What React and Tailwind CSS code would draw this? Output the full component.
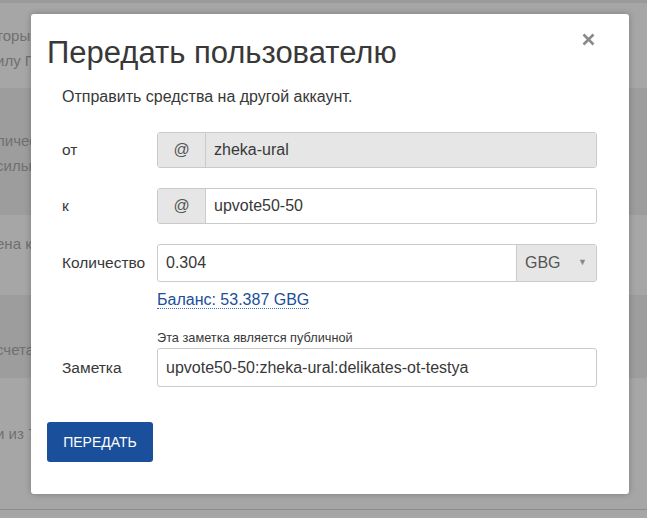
import React from "react";

const bands = [
  { h: "h-[85px]", bg: "bg-[#a6a6a6]", pt: "pt-[20px]", lines: ["торый вы", "илу Голоса"] },
  { h: "h-[127px]", bg: "bg-[#9d9d9d]", pt: "pt-[40px]", lines: ["личество", "сильнее"] },
  { h: "h-[80px]", bg: "bg-[#a6a6a6]", pt: "pt-[16px]", lines: ["ена к"] },
  { h: "h-[83px]", bg: "bg-[#9d9d9d]", pt: "pt-[42px]", lines: ["счета"] },
  { h: "h-[131px]", bg: "bg-[#a6a6a6]", pt: "pt-[43px]", lines: ["и из 7"] },
];

const Background = () => (
  <div className="flex flex-col">
    <div className="h-[3px] bg-[#9a9a9a]" />
    {bands.map((b, i) => (
      <div key={i} className={`${b.h} ${b.bg} ${b.pt} overflow-hidden`}>
        {b.lines.map((t, j) => (
          <div
            key={j}
            className="-ml-[4px] whitespace-nowrap text-[15px] leading-[25px] text-[#707070]"
          >
            {t}
          </div>
        ))}
      </div>
    ))}
    <div className="h-[89px] border-t border-[#8c8c8c] bg-[#a6a6a6]" />
  </div>
);

const Row = ({ label, children, className = "" }) => (
  <div className={`flex items-center ${className}`}>
    <div className="w-[95px] shrink-0 text-[15.5px] text-[#383838]">{label}</div>
    <div className="flex-1">{children}</div>
  </div>
);

const AtGroup = ({ value, disabled }) => (
  <div className="flex h-[36px] overflow-hidden rounded-[3px] border border-[#cacaca]">
    <div className="flex w-[48px] items-center justify-center border-r border-[#cacaca] bg-[#e6e6e6] text-[16px] text-[#555]">
      @
    </div>
    <div
      className={`flex flex-1 items-center px-[8px] text-[16px] text-[#383838] ${
        disabled ? "bg-[#e6e6e6]" : "bg-white"
      }`}
    >
      {value}
    </div>
  </div>
);

export default function App() {
  return (
    <div className="relative h-[518px] w-[647px] overflow-hidden bg-[#a6a6a6] font-['Liberation_Sans',Arial,sans-serif]">
      <Background />

      {/* modal */}
      <div className="absolute left-[31px] top-[14px] h-[480px] w-[598px] rounded-[3px] bg-white px-[16px] pt-[22px] shadow-[0_0_6px_rgba(0,0,0,0.25)]">
        <button className="absolute right-[34px] top-[19px] text-[#8a8a8a]">
          <svg width="13" height="13" viewBox="0 0 13 13">
            <path d="M1.5 1.5 L11.5 11.5 M11.5 1.5 L1.5 11.5" stroke="currentColor" strokeWidth="2.6" />
          </svg>
        </button>

        <h2 className="text-[31px] leading-[34px] font-normal text-[#383838]">
          Передать пользователю
        </h2>

        <div className="ml-[15px] mr-[16px]">
          <p className="mt-[17px] text-[16px] leading-[20px] text-[#383838]">
            Отправить средства на другой аккаунт.
          </p>

          <Row label="от" className="mt-[25px]">
            <AtGroup value="zheka-ural" disabled />
          </Row>

          <Row label="к" className="mt-[20px]">
            <AtGroup value="upvote50-50" />
          </Row>

          <Row label="Количество" className="mt-[20px]">
            <div className="flex h-[38px] overflow-hidden rounded-[3px] border border-[#cacaca]">
              <div className="flex flex-1 items-center px-[8px] text-[16px] text-[#383838]">
                0.304
              </div>
              <div className="flex w-[80px] items-center justify-between border-l border-[#cacaca] bg-[#e6e6e6] pl-[8px] pr-[9px] text-[16px] text-[#555]">
                <span>GBG</span>
                <span className="text-[9px] text-[#888]">▼</span>
              </div>
            </div>
          </Row>

          <div className="ml-[95px] mt-[9px] leading-[18px]">
            <span className="border-b border-dotted border-[#3b6db3] text-[16px] leading-[18px] text-[#1a5099]">
              Баланс: 53.387 GBG
            </span>
          </div>

          <div className="ml-[95px] mt-[22px] text-[12.75px] leading-[14px] text-[#383838]">
            Эта заметка является публичной
          </div>
          <Row label="Заметка" className="mt-[3px]">
            <div className="flex h-[39px] items-center rounded-[3px] border border-[#cacaca] px-[8px] text-[16px] text-[#383838]">
              upvote50-50:zheka-ural:delikates-ot-testya
            </div>
          </Row>
        </div>

        <button className="mt-[35px] h-[40px] w-[106px] rounded-[3px] bg-[#1a4f9b] text-[14px] text-white">
          ПЕРЕДАТЬ
        </button>
      </div>
    </div>
  );
}
